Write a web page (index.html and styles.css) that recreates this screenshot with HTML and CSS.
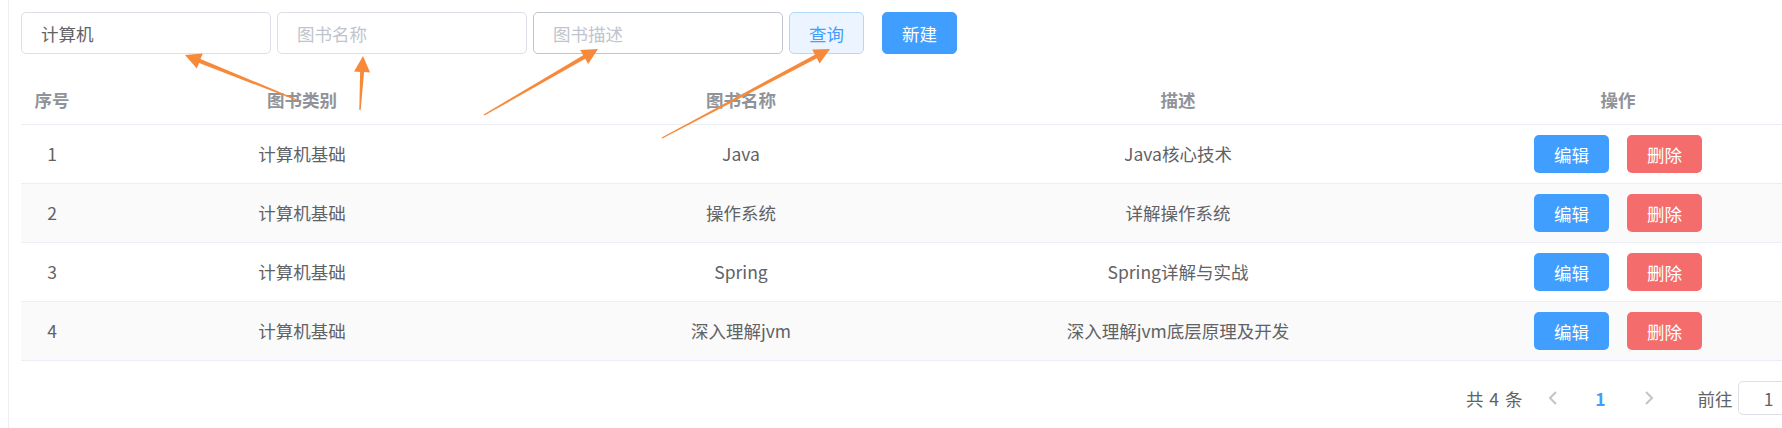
FILE: index.html
```html
<!DOCTYPE html>
<html lang="zh-CN">
<head>
<meta charset="utf-8">
<title>图书管理</title>
<link rel="stylesheet" href="styles.css">
</head>
<body>
<div class="page">
  <div class="toolbar">
    <input class="field" type="text" value="计算机">
    <input class="field" type="text" placeholder="图书名称">
    <input class="field field-hover" type="text" placeholder="图书描述">
    <button class="btn btn-query">查询</button>
    <button class="btn btn-new">新建</button>
  </div>

  <div class="table">
    <div class="tr thead">
      <div class="cell">序号</div>
      <div class="cell">图书类别</div>
      <div class="cell">图书名称</div>
      <div class="cell">描述</div>
      <div class="cell">操作</div>
    </div>
    <div class="tr">
      <div class="cell">1</div>
      <div class="cell">计算机基础</div>
      <div class="cell">Java</div>
      <div class="cell">Java核心技术</div>
      <div class="cell ops"><button class="op op-edit">编辑</button><button class="op op-del">删除</button></div>
    </div>
    <div class="tr stripe">
      <div class="cell">2</div>
      <div class="cell">计算机基础</div>
      <div class="cell">操作系统</div>
      <div class="cell">详解操作系统</div>
      <div class="cell ops"><button class="op op-edit">编辑</button><button class="op op-del">删除</button></div>
    </div>
    <div class="tr">
      <div class="cell">3</div>
      <div class="cell">计算机基础</div>
      <div class="cell">Spring</div>
      <div class="cell">Spring详解与实战</div>
      <div class="cell ops"><button class="op op-edit">编辑</button><button class="op op-del">删除</button></div>
    </div>
    <div class="tr stripe">
      <div class="cell">4</div>
      <div class="cell">计算机基础</div>
      <div class="cell">深入理解jvm</div>
      <div class="cell">深入理解jvm底层原理及开发</div>
      <div class="cell ops"><button class="op op-edit">编辑</button><button class="op op-del">删除</button></div>
    </div>
  </div>

  <div class="pagination">
    <span class="total">共 4 条</span>
    <span class="pg-btn">
      <svg width="10" height="16" viewBox="0 0 10 16"><polyline points="8,2 2,8 8,14" fill="none" stroke="#c0c4cc" stroke-width="2"/></svg>
    </span>
    <span class="pg-btn pg-active">1</span>
    <span class="pg-btn">
      <svg width="10" height="16" viewBox="0 0 10 16"><polyline points="2,2 8,8 2,14" fill="none" stroke="#c0c4cc" stroke-width="2"/></svg>
    </span>
    <span class="jump">前往<input class="jump-input" type="text" value="1">页</span>
  </div>
</div>

<svg class="overlay" width="1782" height="428" viewBox="0 0 1782 428">
  <polygon class="arrow" points="297.3,99.4 200.5,59.1 202.8,53.6 185,55 196.8,68.4 199.1,62.9 296.7,100.6"/>
  <polygon class="arrow" points="360.7,110 364.1,72.1 370.1,72.4 363,56 354.1,71.6 360.1,71.9 359.3,110"/>
  <polygon class="arrow" points="484.35,115.6 585.2,58.7 588.2,63.9 598,49 580.2,50.1 583.2,55.3 483.65,114.4"/>
  <polygon class="arrow" points="662.3,138.6 816.8,58.3 819.6,63.6 830,49 812.2,49.4 814.9,54.7 661.7,137.4"/>
</svg>
</body>
</html>
```

FILE: styles.css
```css
html, body {
  margin: 0;
  padding: 0;
  background: #ffffff;
}

body {
  position: relative;
  width: 1782px;
  height: 428px;
  overflow: hidden;
  font-family: "Noto Sans CJK SC", "Noto Sans", sans-serif;
  font-size: 17.5px;
  color: #606266;
}

.page {
  box-sizing: border-box;
  margin-left: 8px;
  width: 1774px;
  height: 428px;
  border-left: 1px solid #efefef;
  padding: 12px 0 0 12px;
  overflow: hidden;
}

.toolbar {
  display: flex;
  align-items: center;
  gap: 6px;
  height: 42px;
}

.field {
  box-sizing: border-box;
  width: 250px;
  height: 42px;
  border: 1px solid #dcdfe6;
  border-radius: 5px;
  padding: 0 19px;
  font-family: inherit;
  font-size: 17.5px;
  color: #606266;
  outline: none;
  background: #fff;
}

.field::placeholder {
  color: #c0c4cc;
}

.field-hover {
  border-color: #c0c4cc;
}

.btn {
  box-sizing: border-box;
  width: 75px;
  height: 42px;
  border: 1px solid;
  border-radius: 5px;
  font-family: inherit;
  font-size: 17.5px;
  padding: 0;
}

.btn-query {
  background: #ecf5ff;
  border-color: #b3d8ff;
  color: #409eff;
}

.btn-new {
  margin-left: 12px;
  background: #409eff;
  border-color: #409eff;
  color: #ffffff;
}

.table {
  margin-top: 22px;
  width: 1820px;
}

.tr {
  box-sizing: border-box;
  display: grid;
  grid-template-columns: 62px 438px 440px 434px 446px;
  align-items: center;
  height: 59px;
  border-bottom: 1px solid #ebeef5;
  text-align: center;
  line-height: 24px;
}

.thead {
  height: 49px;
  color: #909399;
  font-weight: bold;
}

.stripe {
  background: #fafafa;
}

.ops {
  display: flex;
  justify-content: center;
  gap: 18px;
}

.op {
  width: 75px;
  height: 38px;
  border: none;
  border-radius: 5px;
  color: #ffffff;
  font-family: inherit;
  font-size: 17.5px;
  padding: 0;
}

.op-edit {
  background: #409eff;
}

.op-del {
  background: #f56c6c;
}

.pagination {
  display: flex;
  align-items: center;
  justify-content: flex-end;
  width: 1799px;
  height: 34px;
  margin-top: 20px;
}

.total {
  margin-right: 6px;
  white-space: pre;
  word-spacing: 2px;
}

.pg-btn {
  display: flex;
  align-items: center;
  justify-content: center;
  width: 48px;
  height: 34px;
}

.pg-active {
  color: #409eff;
  font-weight: bold;
}

.jump {
  display: flex;
  align-items: center;
  margin-left: 25px;
}

.jump-input {
  box-sizing: border-box;
  width: 62px;
  height: 34px;
  margin: 0 3px 0 5px;
  border: 1px solid #dcdfe6;
  border-radius: 5px;
  text-align: center;
  font-family: inherit;
  font-size: 17.5px;
  color: #606266;
  outline: none;
}

.overlay {
  position: absolute;
  left: 0;
  top: 0;
  pointer-events: none;
}

.arrow {
  fill: #f68a3a;
}
```
